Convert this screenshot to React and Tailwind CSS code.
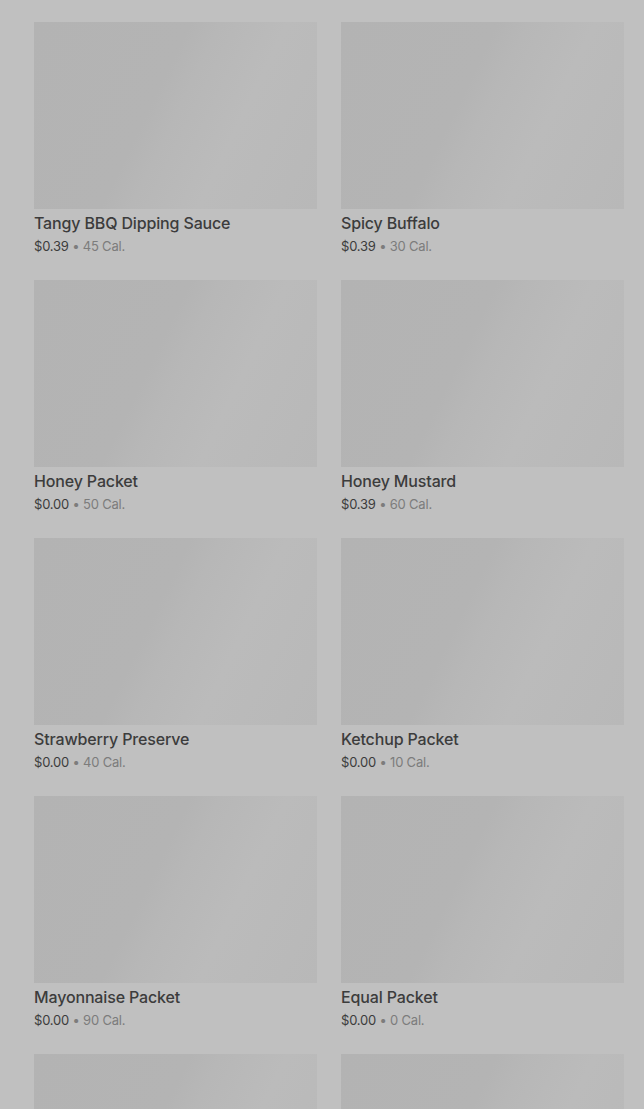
import React from 'react';

const items = [
  { name: 'Tangy BBQ Dipping Sauce', price: '$0.39', cal: '45 Cal.' },
  { name: 'Spicy Buffalo', price: '$0.39', cal: '30 Cal.' },
  { name: 'Honey Packet', price: '$0.00', cal: '50 Cal.' },
  { name: 'Honey Mustard', price: '$0.39', cal: '60 Cal.' },
  { name: 'Strawberry Preserve', price: '$0.00', cal: '40 Cal.' },
  { name: 'Ketchup Packet', price: '$0.00', cal: '10 Cal.' },
  { name: 'Mayonnaise Packet', price: '$0.00', cal: '90 Cal.' },
  { name: 'Equal Packet', price: '$0.00', cal: '0 Cal.' },
  { id: 'more-1' },
  { id: 'more-2' },
];

const Card = ({ item }) => {
  return (
    <div className="flex flex-col">
      <div className="h-[187px] w-full bg-[linear-gradient(116deg,#b3b3b3_0%,#b4b4b4_42%,#b7b7b7_50%,#bbbbbb_68%,#b8b8b8_100%)]" />
      {item.name && (
        <>
          <div className="mt-[2px] text-[16px] leading-[24px] font-medium tracking-[-0.15px] text-[#3c3c3c] truncate">
            {item.name}
          </div>
          <div className="text-[13px] leading-[22px] tracking-[-0.2px] text-[#3c3c3c]">
            {item.price}
            <span className="text-[#7c7c7c]"> • {item.cal}</span>
          </div>
        </>
      )}
    </div>
  );
};

const App = () => {
  return (
    <div className="h-[1109px] overflow-hidden bg-[#c0c0c0] pl-[34px] pr-[20px] pt-[22px] font-['Inter','Roboto',sans-serif]">
      <div className="grid grid-cols-2 gap-x-[24px] gap-y-[23px]">
        {items.map((item) => (
          <Card key={item.name || item.id} item={item} />
        ))}
      </div>
    </div>
  );
};

export default App;
